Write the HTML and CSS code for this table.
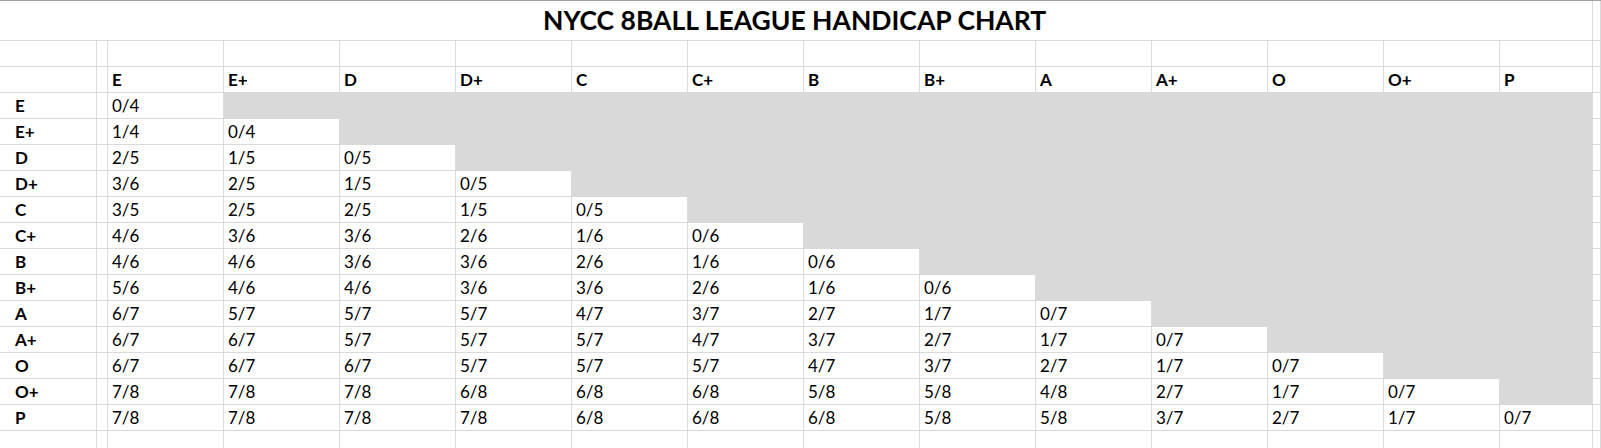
FILE: index.html
```html
<!DOCTYPE html>
<html>
<head>
<meta charset="utf-8">
<link rel="stylesheet" href="styles.css">
</head>
<body>
<div class="sheet">
  <div class="title">NYCC 8BALL LEAGUE HANDICAP CHART</div><div class="c"></div>

  <div class="c"></div><div class="c"></div><div class="c"></div><div class="c"></div><div class="c"></div><div class="c"></div><div class="c"></div><div class="c"></div><div class="c"></div><div class="c"></div><div class="c"></div><div class="c"></div><div class="c"></div><div class="c"></div><div class="c"></div><div class="c"></div>

  <div class="c"></div><div class="c"></div><div class="c h">E</div><div class="c h">E+</div><div class="c h">D</div><div class="c h">D+</div><div class="c h">C</div><div class="c h">C+</div><div class="c h">B</div><div class="c h">B+</div><div class="c h">A</div><div class="c h">A+</div><div class="c h">O</div><div class="c h">O+</div><div class="c h">P</div><div class="c"></div>

  <div class="c l">E</div><div class="c"></div><div class="c">0/4</div><div class="c g"></div><div class="c g"></div><div class="c g"></div><div class="c g"></div><div class="c g"></div><div class="c g"></div><div class="c g"></div><div class="c g"></div><div class="c g"></div><div class="c g"></div><div class="c g"></div><div class="c g e"></div><div class="c"></div>

  <div class="c l">E+</div><div class="c"></div><div class="c">1/4</div><div class="c">0/4</div><div class="c g"></div><div class="c g"></div><div class="c g"></div><div class="c g"></div><div class="c g"></div><div class="c g"></div><div class="c g"></div><div class="c g"></div><div class="c g"></div><div class="c g"></div><div class="c g e"></div><div class="c"></div>

  <div class="c l">D</div><div class="c"></div><div class="c">2/5</div><div class="c">1/5</div><div class="c">0/5</div><div class="c g"></div><div class="c g"></div><div class="c g"></div><div class="c g"></div><div class="c g"></div><div class="c g"></div><div class="c g"></div><div class="c g"></div><div class="c g"></div><div class="c g e"></div><div class="c"></div>

  <div class="c l">D+</div><div class="c"></div><div class="c">3/6</div><div class="c">2/5</div><div class="c">1/5</div><div class="c">0/5</div><div class="c g"></div><div class="c g"></div><div class="c g"></div><div class="c g"></div><div class="c g"></div><div class="c g"></div><div class="c g"></div><div class="c g"></div><div class="c g e"></div><div class="c"></div>

  <div class="c l">C</div><div class="c"></div><div class="c">3/5</div><div class="c">2/5</div><div class="c">2/5</div><div class="c">1/5</div><div class="c">0/5</div><div class="c g"></div><div class="c g"></div><div class="c g"></div><div class="c g"></div><div class="c g"></div><div class="c g"></div><div class="c g"></div><div class="c g e"></div><div class="c"></div>

  <div class="c l">C+</div><div class="c"></div><div class="c">4/6</div><div class="c">3/6</div><div class="c">3/6</div><div class="c">2/6</div><div class="c">1/6</div><div class="c">0/6</div><div class="c g"></div><div class="c g"></div><div class="c g"></div><div class="c g"></div><div class="c g"></div><div class="c g"></div><div class="c g e"></div><div class="c"></div>

  <div class="c l">B</div><div class="c"></div><div class="c">4/6</div><div class="c">4/6</div><div class="c">3/6</div><div class="c">3/6</div><div class="c">2/6</div><div class="c">1/6</div><div class="c">0/6</div><div class="c g"></div><div class="c g"></div><div class="c g"></div><div class="c g"></div><div class="c g"></div><div class="c g e"></div><div class="c"></div>

  <div class="c l">B+</div><div class="c"></div><div class="c">5/6</div><div class="c">4/6</div><div class="c">4/6</div><div class="c">3/6</div><div class="c">3/6</div><div class="c">2/6</div><div class="c">1/6</div><div class="c">0/6</div><div class="c g"></div><div class="c g"></div><div class="c g"></div><div class="c g"></div><div class="c g e"></div><div class="c"></div>

  <div class="c l">A</div><div class="c"></div><div class="c">6/7</div><div class="c">5/7</div><div class="c">5/7</div><div class="c">5/7</div><div class="c">4/7</div><div class="c">3/7</div><div class="c">2/7</div><div class="c">1/7</div><div class="c">0/7</div><div class="c g"></div><div class="c g"></div><div class="c g"></div><div class="c g e"></div><div class="c"></div>

  <div class="c l">A+</div><div class="c"></div><div class="c">6/7</div><div class="c">6/7</div><div class="c">5/7</div><div class="c">5/7</div><div class="c">5/7</div><div class="c">4/7</div><div class="c">3/7</div><div class="c">2/7</div><div class="c">1/7</div><div class="c">0/7</div><div class="c g"></div><div class="c g"></div><div class="c g e"></div><div class="c"></div>

  <div class="c l">O</div><div class="c"></div><div class="c">6/7</div><div class="c">6/7</div><div class="c">6/7</div><div class="c">5/7</div><div class="c">5/7</div><div class="c">5/7</div><div class="c">4/7</div><div class="c">3/7</div><div class="c">2/7</div><div class="c">1/7</div><div class="c">0/7</div><div class="c g"></div><div class="c g e"></div><div class="c"></div>

  <div class="c l">O+</div><div class="c"></div><div class="c">7/8</div><div class="c">7/8</div><div class="c">7/8</div><div class="c">6/8</div><div class="c">6/8</div><div class="c">6/8</div><div class="c">5/8</div><div class="c">5/8</div><div class="c">4/8</div><div class="c">2/7</div><div class="c">1/7</div><div class="c">0/7</div><div class="c g e"></div><div class="c"></div>

  <div class="c l">P</div><div class="c"></div><div class="c">7/8</div><div class="c">7/8</div><div class="c">7/8</div><div class="c">7/8</div><div class="c">6/8</div><div class="c">6/8</div><div class="c">6/8</div><div class="c">5/8</div><div class="c">5/8</div><div class="c">3/7</div><div class="c">2/7</div><div class="c">1/7</div><div class="c">0/7</div><div class="c"></div>

  <div class="c"></div><div class="c"></div><div class="c"></div><div class="c"></div><div class="c"></div><div class="c"></div><div class="c"></div><div class="c"></div><div class="c"></div><div class="c"></div><div class="c"></div><div class="c"></div><div class="c"></div><div class="c"></div><div class="c"></div><div class="c"></div>
</div>
</body>
</html>
```

FILE: styles.css
```css
html, body {
  margin: 0;
  padding: 0;
  background: #ffffff;
  overflow: hidden;
}

body {
  width: 1601px;
  height: 448px;
  font-family: Lato, "Liberation Sans", sans-serif;
  color: #000000;
}

.sheet {
  display: grid;
  grid-template-columns: 97px 11px repeat(12, 116px) 93px 8px;
  grid-template-rows: 40px;
  grid-auto-rows: 26px;
  border-top: 1px solid #a3a3a3;
}

.c {
  box-sizing: border-box;
  border-right: 1px solid #dadada;
  border-bottom: 1px solid #dadada;
  display: flex;
  align-items: flex-end;
  padding: 0 0 2px 4px;
  font-size: 17px;
  line-height: 20px;
  white-space: nowrap;
  overflow: hidden;
}

.title {
  grid-column: 1 / 16;
  box-sizing: border-box;
  border-right: 1px solid #dadada;
  border-bottom: 1px solid #dadada;
  display: flex;
  align-items: flex-end;
  padding: 0 0 4px 543px;
  font-size: 26.5px;
  line-height: 32px;
  font-weight: 700;
  white-space: nowrap;
}

.h {
  font-weight: 700;
}

.l {
  font-weight: 700;
  padding-left: 15px;
}

.g {
  background: #d9d9d9;
  border-color: #d9d9d9;
}

.g.e {
  border-right-color: #dadada;
}
```
